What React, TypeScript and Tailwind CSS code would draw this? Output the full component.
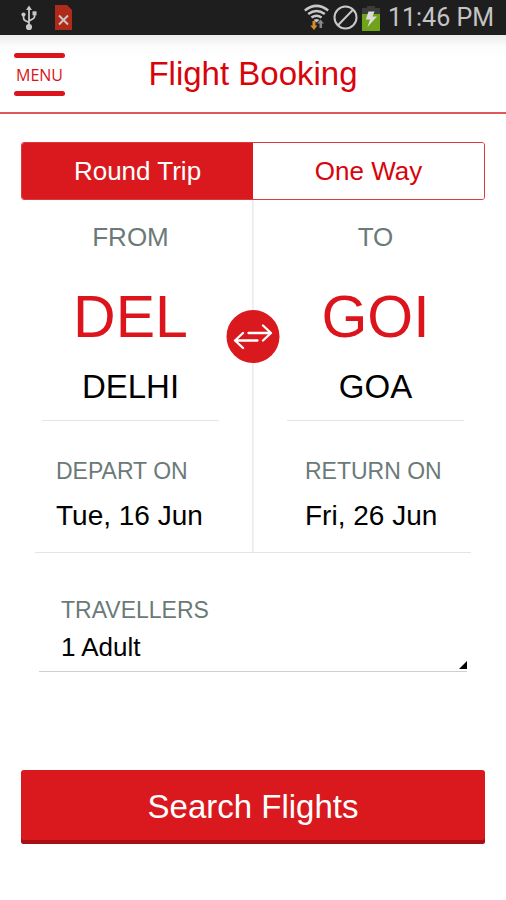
import { useState } from 'react'

type Trip = 'round' | 'oneway'

interface AirportProps {
  label: string
  code: string
  city: string
}

function StatusBar() {
  return (
    <div className="flex h-[35px] items-center justify-between bg-[#1e1e1e] pr-3 pl-5">
      <div className="flex items-center gap-[17px]">
        <svg width="18" height="26" viewBox="0 0 18 26" fill="none" stroke="#c8c8c8" strokeWidth="1.8" aria-hidden="true">
          <path d="M9 4V20M3.500 9.500V12.500Q3.500 14.500 5 15.500L9 17.500M14.600 8V11Q14.600 13 13 13.800L9 16" />
          <path d="M9 .5L12 5H6Z" fill="#c8c8c8" stroke="none" />
          <circle cx="3.500" cy="9.500" r="2.100" fill="#c8c8c8" stroke="none" />
          <rect x="12.500" y="6.300" width="4" height="4" fill="#c8c8c8" stroke="none" />
          <circle cx="9" cy="22" r="3.100" fill="#c8c8c8" stroke="none" />
        </svg>
        <svg width="17" height="25" viewBox="0 0 17 25" aria-hidden="true">
          <path d="M0 0H12L17 5V25H0Z" fill="#b02a1a" />
          <path d="M4 10.500L13 19.500M13 10.500L4 19.500" stroke="#c8c8c8" strokeWidth="2" />
        </svg>
      </div>

      <div className="flex items-center gap-1">
        <svg width="25" height="27" viewBox="0 0 25 27" fill="none" stroke="#c8c8c8" strokeWidth="2.500" aria-hidden="true">
          <path d="M.8 6.500Q12.500 -2.800 24.200 6.500" />
          <path d="M4.200 10.100Q12.500 3.800 20.800 10.100" />
          <path d="M7.400 13.600Q12.500 10 17.600 13.600" />
          <path d="M9.600 16Q12.500 13.800 15.400 16L12.500 18.500Z" fill="#c8c8c8" stroke="none" />
          <path d="M8.500 17H11.500V21.500H13.500L10 26L6.300 21.500H8.500Z" fill="#d58a2c" stroke="none" />
          <path d="M15.500 24V19.500H13.200L16.500 15.500L20 19.500H18V24Z" fill="#888" stroke="none" />
        </svg>
        <svg width="25" height="25" viewBox="0 0 25 25" fill="none" stroke="#c8c8c8" strokeWidth="2" aria-hidden="true">
          <circle cx="12.500" cy="12.500" r="11" />
          <path d="M20 4.800L5 20.200" />
        </svg>
        <svg width="18" height="26" viewBox="0 0 18 26" aria-hidden="true">
          <path d="M5 1H13V3H18V9H0V3H5Z" fill="#3b3b3b" />
          <path d="M0 9H18V26H0Z" fill="#6fa31a" />
          <path d="M6.500 6.500H12.500L10.500 11.500H15L5.500 22L8 14.500H3.800Z" fill="#dcdcdc" />
        </svg>
        <span className="ml-1 font-[Roboto,sans-serif] text-[25px] leading-8 text-[#c4c4c4]">11:46 PM</span>
      </div>
    </div>
  )
}

function Header() {
  return (
    <header className="relative flex h-[79px] items-center justify-center border-b-2 border-[#e0575a] bg-linear-to-b from-[#ececec] via-[#fcfcfc] via-15% to-white to-30%">
      <button
        type="button"
        className="absolute top-[18px] left-[14px] flex h-[43px] w-[51px] flex-col items-center justify-between font-['Open_Sans',sans-serif] text-base leading-5 font-medium text-[#d8141a] before:h-[5px] before:w-full before:rounded-full before:bg-[#dc141b] after:h-[5px] after:w-full after:rounded-full after:bg-[#dc141b]"
      >
        MENU
      </button>
      <h1 className="text-[33px] leading-10 text-[#d8040a]">Flight Booking</h1>
    </header>
  )
}

function Airport({ label, code, city }: AirportProps) {
  return (
    <button type="button" className="flex w-full flex-col items-center border-b border-[#e4e4e4] pt-5 pb-3.5">
      <span className="text-[26px] leading-[34px] text-[#6b7a78]">{label}</span>
      <span className="mt-8 text-[59px] leading-[62px] text-[#dc141b]">{code}</span>
      <span className="mt-5 text-[33px] leading-[38px] text-black">{city}</span>
    </button>
  )
}

function TravelDate({ label, value }: { label: string; value: string }) {
  return (
    <button type="button" className="flex w-full flex-col items-start pt-9 pb-5 whitespace-nowrap">
      <span className="text-[23px] leading-7 text-[#6b7a78]">{label}</span>
      <span className="mt-[15px] text-[28px] leading-8 text-black">{value}</span>
    </button>
  )
}

export default function App() {
  const [trip, setTrip] = useState<Trip>('round')
  const [from, setFrom] = useState({ code: 'DEL', city: 'DELHI' })
  const [to, setTo] = useState({ code: 'GOI', city: 'GOA' })

  const swap = () => {
    setFrom(to)
    setTo(from)
  }

  const tabClass = (active: boolean) =>
    active ? 'flex-1 bg-[#da191e] text-white' : 'flex-1 bg-white text-[#d8040a]'

  return (
    <div className="min-h-screen bg-white font-['Liberation_Sans',Arial,sans-serif]">
      <StatusBar />
      <Header />

      <main className="px-[21px] pt-7 pb-14">
        <div className="flex h-[58px] overflow-hidden rounded-[3px] border border-[#dc3a3e] text-[26px] leading-8">
          <button type="button" aria-pressed={trip === 'round'} onClick={() => setTrip('round')} className={tabClass(trip === 'round')}>
            Round Trip
          </button>
          <button type="button" aria-pressed={trip === 'oneway'} onClick={() => setTrip('oneway')} className={tabClass(trip === 'oneway')}>
            One Way
          </button>
        </div>

        <section className="relative mx-3.5 grid grid-cols-2 border-b border-[#e4e4e4]">
          <div className="border-r border-[#ececec] pr-[33px] pl-[7px]">
            <Airport label="FROM" code={from.code} city={from.city} />
            <div className="pl-3.5">
              <TravelDate label="DEPART ON" value="Tue, 16 Jun" />
            </div>
          </div>
          <div className="border-l border-[#f2f2f2] pr-[7px] pl-[33px]">
            <Airport label="TO" code={to.code} city={to.city} />
            <div className="pl-[18px]">
              <TravelDate label="RETURN ON" value="Fri, 26 Jun" />
            </div>
          </div>

          {/* swap origin and destination */}
          <button
            type="button"
            aria-label="Swap airports"
            onClick={swap}
            className="absolute top-[110px] left-1/2 size-[53px] -translate-x-1/2 rounded-full bg-[#da191e]"
          >
            <svg viewBox="0 0 53 53" fill="none" stroke="#fff" strokeWidth="2.300" strokeLinecap="round" strokeLinejoin="round" aria-hidden="true">
              <path d="M22 23H44M36.500 15.500L44.500 23L36.500 30.500" />
              <path d="M31 30.500H9M16.500 23L8.500 30.500L16.500 38" />
            </svg>
          </button>
        </section>

        <div className="relative mx-[18px] mt-[43px]">
          <label htmlFor="travellers" className="block pl-[22px] text-[23px] leading-7 text-[#6b7a78]">
            TRAVELLERS
          </label>
          <select
            id="travellers"
            className="mt-1.5 h-[42px] w-full appearance-none border-b border-[#cfcfcf] bg-transparent pb-2 pl-[22px] text-[26px] leading-8 text-black"
          >
            <option>1 Adult</option>
            <option>2 Adults</option>
            <option>3 Adults</option>
          </select>
          <svg className="pointer-events-none absolute right-0 bottom-[3px]" width="8" height="8" viewBox="0 0 8 8" aria-hidden="true">
            <path d="M8 0V8H0Z" fill="#000" />
          </svg>
        </div>

        <button
          type="button"
          className="mt-[98px] h-[74px] w-full rounded-[3px] bg-[#da191e] text-[33px] leading-10 text-white shadow-[inset_0_-4px_0_#a80f14]"
        >
          Search Flights
        </button>
      </main>
    </div>
  )
}
